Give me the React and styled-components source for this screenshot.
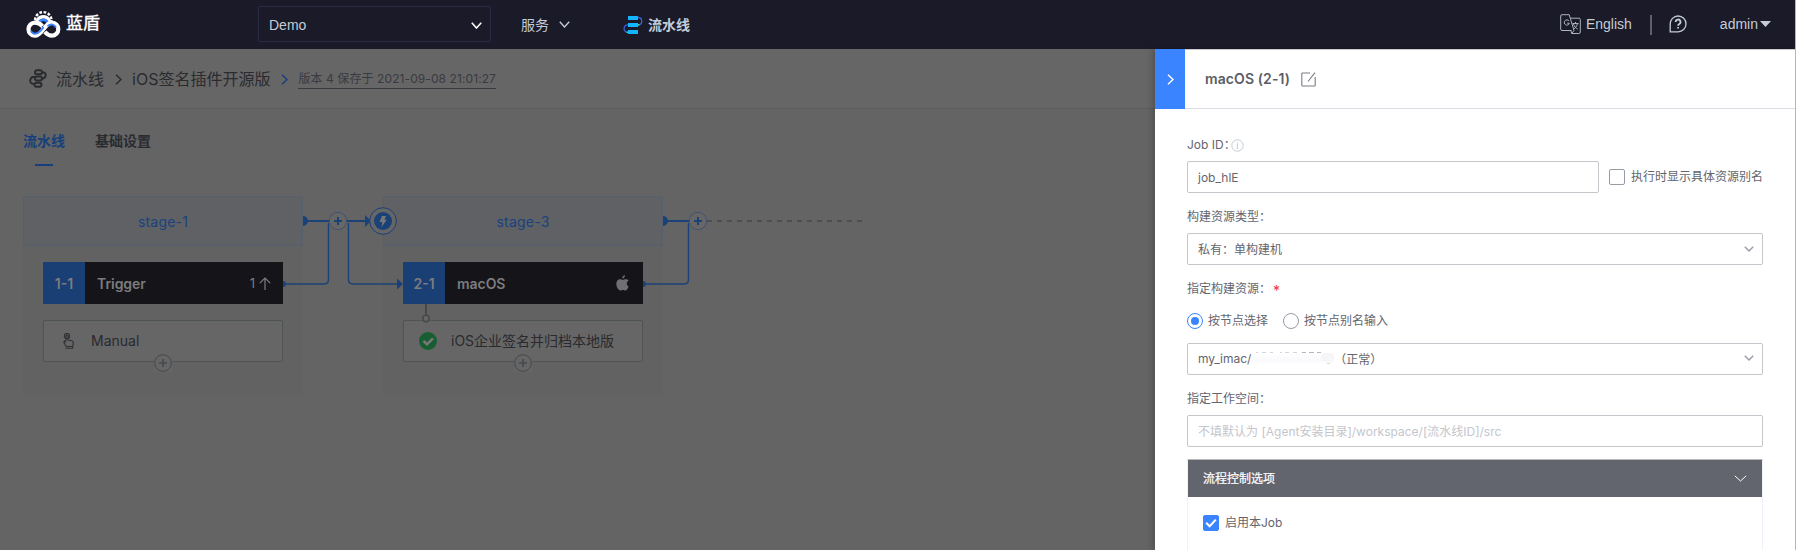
import React from "react";
import styled, { createGlobalStyle } from "styled-components";

const latin = `Inter, "Noto Sans CJK SC", sans-serif`;
const helv = `"Liberation Sans", "Noto Sans CJK SC", sans-serif`;

const Global = createGlobalStyle`
  * { box-sizing: border-box; }
  body { margin: 0; background: #646464; font-family: ${latin}; overflow: hidden; }
`;
const Page = styled.div`
  width: 1796px; height: 550px; display: flex; flex-direction: column; overflow: hidden;
  border-right: 1px solid #b4b8bd; background: #646464;
`;
const TopBar = styled.header`
  flex: 0 0 49px; display: flex; align-items: center; background: #1a1a28; color: #c3cdd7;
  font: 14px/20px ${helv};
`;
const Brand = styled.div`
  width: 258px; padding-left: 26px; display: flex; align-items: center; gap: 5px; margin-top: -2px;
  color: #fff; font-size: 17px; line-height: 24px; -webkit-text-stroke: .4px #fff;
`;
const ProjectSelect = styled.div`
  width: 233px; height: 36px; margin-top: -1px; padding: 2px 8px 0 10px; display: flex; align-items: center;
  justify-content: space-between; border: 1px solid #2a2a42; border-radius: 2px;
`;
const NavItem = styled.div`
  display: flex; align-items: center; gap: ${p => p.$gap}px; margin-left: ${p => p.$left}px;
  font-weight: ${p => (p.$bold ? 700 : 400)};
`;
const TopRight = styled.div`
  margin-left: auto; display: flex; align-items: center; padding-right: 24px; margin-top: -1px;
`;
const Divider = styled.span`
  width: 2px; height: 20px; margin: 2px 17px 0 18px; background: #5e616d;
`;
const Main = styled.div`flex: 1; display: flex; min-height: 0;`;
const Left = styled.main`
  flex: 0 0 1155px; display: flex; flex-direction: column; background: #646464;
`;
const Crumbs = styled.nav`
  height: 60px; flex: none; display: flex; align-items: center; padding-left: 29px;
  background: #666; border-bottom: 1px solid #5c5c5e; color: #2a2b2f; font-size: 16px;
`;
const Crumb = styled.span`margin-left: ${p => p.$left}px; line-height: 24px; white-space: nowrap;`;
const Version = styled.span`
  margin-left: 10px; padding-top: 1px; font-size: 12px; line-height: 18px; color: #393a40;
  border-bottom: 1px solid #393a40; white-space: nowrap; width: 198px; letter-spacing: .09px;
`;
const Tabs = styled.div`display: flex; padding: 21px 0 0 23px; gap: 30px; height: 87px; flex: none;`;
const Tab = styled.div`
  display: flex; flex-direction: column; align-items: center; gap: 12px; font-size: 14px; font-weight: 700;
  line-height: 22px; color: ${p => (p.$active ? "#173f7c" : "#2a2b2f")};
  &::after { content: ""; width: 18px; height: 2px; background: ${p => (p.$active ? "#173f7c" : "transparent")}; }
`;
const Canvas = styled.div`position: relative; display: flex; gap: 80px; padding-left: 23px;`;
const Stage = styled.section`width: 280px; height: 201px; background: #626262;`;
const StageTitle = styled.div`
  height: 50px; display: flex; align-items: center; justify-content: center; font-size: 14px; padding-top: 1px;
  background: #5f6165; border: 1px solid #565f6d; border-radius: 2px; color: #1a427e; letter-spacing: .2px;
`;
const Job = styled.div`
  display: flex; align-items: center; margin: 16px 20px; height: 42px; background: #151419; color: #7c7c7e;
  font-size: 14px; font-weight: 600; padding-right: ${p => p.$right}px;
`;
const JobIndex = styled.div`
  width: 42px; height: 42px; display: flex; align-items: center; justify-content: center; background: #193f74;
`;
const JobName = styled.div`flex: 1; padding-left: 12px; letter-spacing: -.05px;`;
const JobMeta = styled.div`display: flex; align-items: center; gap: 4px; font-size: 13px; font-weight: 400;`;
const Task = styled.div`
  position: relative; margin: 0 20px; height: 42px; display: flex; align-items: center; padding-left: ${p => p.$pad}px;
  gap: ${p => p.$gap}px; background: #666; border: 1px solid #4e5356; border-radius: 2px; font-size: 14px; color: #292a2e;
  line-height: 20px; padding-bottom: 1px;
`;
const AddTask = styled.span`
  position: absolute; left: 110px; top: 33px; width: 18px; height: 18px; display: flex; background: #666;
`;
const Wires = styled.svg`position: absolute; left: 0; top: 0; pointer-events: none;`;
const Panel = styled.aside`
  position: relative; flex: 1; min-width: 0; background: #fff; color: #63656e; font-size: 12px;
  border-top: 1px solid #c9cacc; display: flex; flex-direction: column; box-shadow: -3px 0 6px rgba(0,0,0,.18);
`;
const PanelHead = styled.div`
  display: flex; align-items: center; height: 59px; flex: none; border-bottom: 1px solid #dcdee5;
  font-size: 14px; font-weight: 600; color: #5b5d66; line-height: 20px; letter-spacing: .1px;
`;
const Collapse = styled.button`
  width: 30px; height: 60px; flex: none; border: 0; padding: 0; display: flex; align-items: center; justify-content: center;
  background: #3a84ff; margin: -1px 20px -1px 0;
`;
const Form = styled.form`padding: 26px 32px 0; display: flex; flex-direction: column;`;
const Label = styled.div`
  height: 20px; line-height: 20px; display: flex; align-items: center; gap: 4px; margin-bottom: 6px;
  > svg { margin-left: -9px; }
`;
const Row = styled.div`
  display: flex; align-items: center; gap: ${p => p.$gap}px; white-space: nowrap;
`;
const FieldRow = styled(Row)`margin-bottom: 14px;`;
const RadioRow = styled(Row)`height: 16px; margin: 8px 0 14px;`;
const Caption = styled.span`line-height: 18px; position: relative; margin-bottom: ${p => p.$lift || 0}px;`;
const Field = styled.div`
  flex: none; width: ${p => p.$width || 576}px; height: 32px; display: flex; align-items: center;
  padding: 0 8px ${p => p.$lift || 0}px 10px; border: 1px solid #c4c6cc; border-radius: 2px;
  color: ${p => (p.$placeholder ? "#c4c6cc" : "#63656e")};
  > svg { margin-left: auto; }
`;
const Redacted = styled.span`
  width: 83px; height: 12px; display: flex; border-radius: 4px;
  background: linear-gradient(#fff 10%, #fafafd 60%, #fdfdff);
`;
const Check = styled.span`
  width: 16px; height: 16px; flex: none; border-radius: 2px; display: flex; align-items: center; justify-content: center;
  border: 1px solid ${p => (p.$on ? "#3a84ff" : "#979ba5")}; background: ${p => (p.$on ? "#3a84ff" : "#fff")};
`;
const Radio = styled.span`
  width: 16px; height: 16px; border-radius: 50%; display: flex; align-items: center; justify-content: center;
  border: 1px solid ${p => (p.$on ? "#3a84ff" : "#979ba5")};
  &::after { content: ""; width: 8px; height: 8px; border-radius: 50%; background: ${p => (p.$on ? "#3a84ff" : "transparent")}; }
`;
const Star = styled.span`color: #ea3636; margin-left: -2px; padding-top: 4px; font-size: 14px;`;
const Accordion = styled.div`
  margin: -2px 0 0; height: 120px; border: 1px solid #eff2f8; border-top-color: #b9bac0;
`;
const AccordionHead = styled.div`
  height: 37px; padding: 0 15px; display: flex; align-items: center; justify-content: space-between;
  background: #63656e; color: #fff; -webkit-text-stroke: .2px #fff;
`;
const AccordionBody = styled.div`padding: 17px 15px;`;

const Chevron = ({ w, h, color, sw = 1.4 }) => (
  <svg width={w} height={h} viewBox={`0 0 ${w} ${h}`} fill="none" stroke={color} strokeWidth={sw}>
    <path d={`M.8 .8 L${w / 2} ${h - 1} L${w - 0.8} .8`} />
  </svg>
);
const Angle = ({ color, sw = 1.5, w = 7, h = 11 }) => (
  <svg width={w} height={h} fill="none" stroke={color} strokeWidth={sw}>
    <path d={`M1 .8 L${w - 1} ${h / 2} L1 ${h - 0.8}`} />
  </svg>
);
const Logo = () => (
  <svg width="35" height="28" viewBox="0 0 35 28" fill="none">
    <circle cx="17.3" cy="10.3" r="8.2" stroke="#fff" strokeWidth="2.4" strokeDasharray="2.7 1.6" />
    <path d="M10.900 15a6.600 6.600 0 1 1 12.800 0" stroke="#fff" strokeWidth="3.400" />
    <path d="M12.600 13a5 5 0 0 1 9.400 0" stroke="#3a84ff" strokeWidth="2.400" />
    <circle cx="9" cy="19.200" r="6" fill="#1a1a28" />
    <circle cx="25.800" cy="19.200" r="6" fill="#1a1a28" />
    <path d="M16.400 16.200C14.400 14 12 12.700 9 12.700a6.500 6.500 0 0 0 0 13c7 0 9.800-13 16.800-13a6.500 6.500 0 0 1 0 13c-3.200 0-5-1.600-7-3.800" stroke="#fff" strokeWidth="4.200" />
    <path d="M4.900 20.800c2 4.200 6.400 3.400 9.300.4l3.400-4M21.500 16.300c3.300-3.200 7.200-1.800 8.500 1.400" stroke="#3a84ff" strokeWidth="1.900" />
  </svg>
);
const PipeLogo = () => (
  <svg width="20" height="20" viewBox="0 0 20 20" fill="none">
    <path d="M15 2.500c5 0 5 7.500 0 7.500M5 9.800c-5 0-5.500 7.500 0 7.500" stroke="#3a62d7" strokeWidth="1.300" />
    <path fill="#13b5ff" d="M5 1h10v4H5zM5 8h10v4H5zM5 15h10v4H5z" />
    <path fill="#3ddc9a" d="M15 9h1.500v1.500H15zM3.500 16.500H5V18H3.500z" />
  </svg>
);
const PipeIcon = () => (
  <svg width="18" height="19" viewBox="0 0 18 19" fill="none" stroke="#2a2b2f" strokeWidth="1.900">
    <rect x="6" y="1.200" width="7" height="4" rx="2" /><rect x="6" y="7.500" width="7" height="4" rx="2" />
    <rect x="5.500" y="13.800" width="7" height="4" rx="2" />
    <path d="M13 3.200c5 0 5 6.300 0 6.300M6 7.800c-6 0-6.500 7.200-1 7.200" />
  </svg>
);
const Translate = () => (
  <svg width="21" height="21" viewBox="0 0 21 21" fill="none" stroke="#aab3bf" strokeWidth="1">
    <path d="M11.500 16.500H2a1.300 1.300 0 0 1-1.300-1.300V2A1.300 1.300 0 0 1 2 .7h7.200l4.800 15.800-2.300 3M10.300 4.200H19a1.300 1.300 0 0 1 1.300 1.300V18a1.500 1.500 0 0 1-1.500 1.500h-7.100l-.9-3" />
    <path d="M9 7a2.600 2.600 0 1 0 .4 2.200H7.200M12.500 9.500h6M15.500 8v1.500M17.500 9.500c-.5 2.500-2 4.500-4 5.700M13.500 10c.8 2.300 2.200 4 4.300 5.200" />
  </svg>
);
const Help = () => (
  <svg width="18" height="18" viewBox="0 0 18 18" fill="none" stroke="#c3cdd7" strokeWidth="1.300">
    <path d="M1.200 16.800V9A7.900 7.900 0 1 1 9 16.800z" />
    <path d="M6.700 7a2.400 2.400 0 1 1 3.600 2c-.9.500-1.200.9-1.200 1.700M9.100 12v1.600" strokeWidth="1.800" />
  </svg>
);
const Edit = () => (
  <svg width="15" height="15" viewBox="0 0 15 15" fill="none" stroke="#7a7d86" strokeWidth="1.100">
    <path d="M9 1H1.500a.7.700 0 0 0-.7.700v11.600c0 .4.300.7.700.7h12c.4 0 .7-.3.700-.7V5M14 .7 7 9.500" />
  </svg>
);
const Info = () => (
  <svg width="13" height="13" viewBox="0 0 13 13" fill="none" stroke="#c4cbd6">
    <circle cx="6.500" cy="6.500" r="5.700" /><path d="M5.500 5.700h1.200L6 9.500h1.200M6.500 3.300v1.200" />
  </svg>
);
const Finger = () => (
  <svg width="11" height="16" viewBox="0 0 11 16" fill="none" stroke="#303135" strokeWidth="1.100">
    <circle cx="4" cy="3" r="2.600" /><path d="M3 8V3a1 1 0 0 1 2 0v4l4 .7c.9.200 1.200.7 1.200 1.500V12l-1 1.500H3.200L.8 9.500 1.500 8 3 9.500M2.500 15.300h7.200v-1.800H3" />
  </svg>
);
const Plus = () => (
  <svg width="18" height="18" fill="none" stroke="#45494d">
    <circle cx="9" cy="9" r="8.300" fill="#666" /><path d="M5 9h8M9 5v8" strokeWidth="1.600" />
  </svg>
);
const Done = () => (
  <svg width="18" height="18" fill="none">
    <circle cx="9" cy="9" r="9" fill="#175f33" /><path d="M4.500 9 8 12.300l6-6" stroke="#777" strokeWidth="2.600" />
  </svg>
);
const Tick = () => (
  <svg width="12" height="10" fill="none" stroke="#fff" strokeWidth="2"><path d="M1.200 4.800 4.600 8.200 10.800 1.600" /></svg>
);
const Remains = () => (
  <svg width="83" height="12" fill="none" stroke="#d5d6db">
    <path d="M5 .5h2M11 .5h4M19 .5h3M29 .5h2M34 .5h4M42 .5h4" /><path d="M51 .5h4M58 .5h5M66 .5h4" stroke="#b4b5bb" />
    <rect x="70" y="1" width="13" height="9" rx="4" fill="#f6f6f8" stroke="none" /><path d="M76 11.500h3" />
  </svg>
);
const Apple = () => (
  <svg width="13" height="16" viewBox="0 0 13 16" fill="#707073">
    <path d="M9 0c.2 1.800-1.200 3.400-2.800 3.500C6 1.800 7.500.2 9 0zM12.600 11.500c-.8 2.200-2 4-3.300 4-.9 0-1.300-.5-2.400-.5s-1.600.5-2.400.5C2.400 15.500.3 12 .3 8.800.3 6 2 4.200 4 4.200c1.100 0 2 .7 2.800.7.700 0 1.800-.8 3.200-.7 1 0 2 .5 2.600 1.300-2.600 1.500-2.200 5 0 6z" />
  </svg>
);
const Up = () => (
  <svg width="12" height="13" fill="none" stroke="#7c7c7e" strokeWidth="1.200"><path d="M6 13V1M.8 6.200 6 1l5.200 5.200" /></svg>
);

function Connections() {
  const blue = "#1a4178";
  return (
    <Wires width="900" height="201" fill="none" stroke={blue}>
      <path d="M303 25h78M663 25h26" strokeWidth="2" />
      <path d="M707 25h156" stroke="#4c4e52" strokeWidth="2" strokeDasharray="5 5" />
      <path d="M284 88h40q4.500 0 4.500-4.500V27M348.500 27v56.500q0 4.500 4.500 4.500h46M644 88h40q4.500 0 4.500-4.500V27" strokeWidth="1.400" />
      <g fill={blue} stroke="none">
        <path d="M303 20a5 5 0 0 1 0 10zM663 20a5 5 0 0 1 0 10zM365 19l6 6-6 6zM397 82.500l6 5.500-6 5.500zM283 85a3 3 0 0 1 0 6zM643 85a3 3 0 0 1 0 6z" />
      </g>
      <g fill="#666" stroke="#3f536e">
        <circle cx="338" cy="25" r="8.700" /><circle cx="698" cy="25" r="8.700" />
      </g>
      <path d="M334 25h8M338 21v8M694 25h8M698 21v8" strokeWidth="2" />
      <circle cx="383" cy="25" r="13.300" fill="#666" />
      <circle cx="383" cy="25" r="9" fill={blue} stroke="none" />
      <path d="M382 20h4l-1.500 3.800h2.300L381.500 31l.8-5h-2.800z" fill="#777" stroke="none" />
      <path d="M426 108v12" stroke="#46494c" strokeWidth="2" />
      <circle cx="426" cy="122.500" r="3.200" fill="#666" stroke="#46494c" strokeWidth="1.500" />
    </Wires>
  );
}

export default function App() {
  return (
    <Page>
      <Global />
      <TopBar>
        <Brand><Logo />蓝盾</Brand>
        <ProjectSelect>Demo<Chevron w={11} h={7} color="#fff" sw={1.6} /></ProjectSelect>
        <NavItem $left={30} $gap={10}>服务<Chevron w={11} h={7} color="#c3cdd7" /></NavItem>
        <NavItem $left={53} $gap={5} $bold><PipeLogo />流水线</NavItem>
        <TopRight>
          <NavItem $left={0} $gap={5}><Translate />English</NavItem>
          <Divider />
          <Help />
          <NavItem $left={33} $gap={2}>admin<svg width="11" height="6"><path d="M0 0h11L5.500 6z" fill="#c3cdd7" /></svg></NavItem>
        </TopRight>
      </TopBar>
      <Main>
        <Left>
          <Crumbs>
            <PipeIcon />
            <Crumb $left={9}>流水线</Crumb>
            <Crumb $left={11}><Angle color="#2a2b2f" /></Crumb>
            <Crumb $left={10}>iOS签名插件开源版</Crumb>
            <Crumb $left={11}><Angle color="#173f7c" /></Crumb>
            <Version>版本 4 保存于 2021-09-08 21:01:27</Version>
          </Crumbs>
          <Tabs><Tab $active>流水线</Tab><Tab>基础设置</Tab></Tabs>
          <Canvas>
            <Stage>
              <StageTitle>stage-1</StageTitle>
              <Job $right={12}><JobIndex>1-1</JobIndex><JobName>Trigger</JobName><JobMeta>1<Up /></JobMeta></Job>
              <Task $pad={19} $gap={17}><Finger />Manual<AddTask><Plus /></AddTask></Task>
            </Stage>
            <Stage>
              <StageTitle>stage-3</StageTitle>
              <Job $right={14}><JobIndex>2-1</JobIndex><JobName>macOS</JobName><Apple /></Job>
              <Task $pad={15} $gap={14}><Done />iOS企业签名并归档本地版<AddTask><Plus /></AddTask></Task>
            </Stage>
            <Connections />
          </Canvas>
        </Left>
        <Panel>
          <PanelHead>
            <Collapse type="button" aria-label="collapse"><Angle color="#fff" /></Collapse>
            <Row $gap={11}>macOS (2-1)<Edit /></Row>
          </PanelHead>
          <Form>
            <Label>Job ID：<Info /></Label>
            <FieldRow $gap={10}>
              <Field $width={412}>job_hlE</Field>
              <Row $gap={6}><Check /><Caption>执行时显示具体资源别名</Caption></Row>
            </FieldRow>
            <Label>构建资源类型：</Label>
            <FieldRow><Field $lift={1}>私有：单构建机<Chevron w={10} h={6} color="#979ba5" /></Field></FieldRow>
            <Label>指定构建资源：<Star>*</Star></Label>
            <RadioRow $gap={15}>
              <Row $gap={5}><Radio $on /><Caption>按节点选择</Caption></Row>
              <Row $gap={5}><Radio /><Caption>按节点别名输入</Caption></Row>
            </RadioRow>
            <FieldRow><Field $lift={2}>my_imac/<Redacted><Remains /></Redacted>（正常）<Chevron w={10} h={6} color="#979ba5" /></Field></FieldRow>
            <Label>指定工作空间：</Label>
            <FieldRow><Field $placeholder $lift={1}>不填默认为 [Agent安装目录]/workspace/[流水线ID]/src</Field></FieldRow>
            <Accordion>
              <AccordionHead><Caption>流程控制选项</Caption><Chevron w={13} h={7} color="#fff" sw={1} /></AccordionHead>
              <AccordionBody><Row $gap={6}><Check $on><Tick /></Check><Caption>启用本Job</Caption></Row></AccordionBody>
            </Accordion>
          </Form>
        </Panel>
      </Main>
    </Page>
  );
}
